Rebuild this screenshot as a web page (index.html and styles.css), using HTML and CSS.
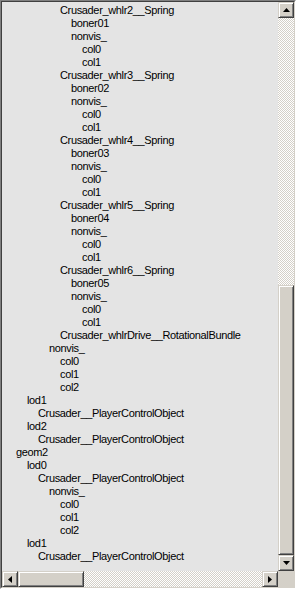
FILE: index.html
```html
<!DOCTYPE html>
<html lang="en">
<head>
    <meta charset="UTF-8">
    <title>Tree</title>
    <link rel="stylesheet" href="styles.css">
</head>
<body>
    <div class="treeview">
        <div class="inner">
            <div class="items">
                <div class="row lv4">Crusader_whlr2__Spring</div>
                <div class="row lv5">boner01</div>
                <div class="row lv5">nonvis_</div>
                <div class="row lv6">col0</div>
                <div class="row lv6">col1</div>
                <div class="row lv4">Crusader_whlr3__Spring</div>
                <div class="row lv5">boner02</div>
                <div class="row lv5">nonvis_</div>
                <div class="row lv6">col0</div>
                <div class="row lv6">col1</div>
                <div class="row lv4">Crusader_whlr4__Spring</div>
                <div class="row lv5">boner03</div>
                <div class="row lv5">nonvis_</div>
                <div class="row lv6">col0</div>
                <div class="row lv6">col1</div>
                <div class="row lv4">Crusader_whlr5__Spring</div>
                <div class="row lv5">boner04</div>
                <div class="row lv5">nonvis_</div>
                <div class="row lv6">col0</div>
                <div class="row lv6">col1</div>
                <div class="row lv4">Crusader_whlr6__Spring</div>
                <div class="row lv5">boner05</div>
                <div class="row lv5">nonvis_</div>
                <div class="row lv6">col0</div>
                <div class="row lv6">col1</div>
                <div class="row lv4">Crusader_whlrDrive__RotationalBundle</div>
                <div class="row lv3">nonvis_</div>
                <div class="row lv4">col0</div>
                <div class="row lv4">col1</div>
                <div class="row lv4">col2</div>
                <div class="row lv1">lod1</div>
                <div class="row lv2">Crusader__PlayerControlObject</div>
                <div class="row lv1">lod2</div>
                <div class="row lv2">Crusader__PlayerControlObject</div>
                <div class="row lv0">geom2</div>
                <div class="row lv1">lod0</div>
                <div class="row lv2">Crusader__PlayerControlObject</div>
                <div class="row lv3">nonvis_</div>
                <div class="row lv4">col0</div>
                <div class="row lv4">col1</div>
                <div class="row lv4">col2</div>
                <div class="row lv1">lod1</div>
                <div class="row lv2">Crusader__PlayerControlObject</div>
            </div>

            <!-- vertical scrollbar -->
            <div class="vscroll">
                <div class="btn">
                    <svg width="7" height="4" viewBox="0 0 7 4"><polygon points="3.5,0 7,4 0,4" fill="#000"/></svg>
                </div>
                <div class="track vtrack">
                    <div class="thumb vthumb"></div>
                </div>
                <div class="btn">
                    <svg width="7" height="4" viewBox="0 0 7 4"><polygon points="0,0 7,0 3.5,4" fill="#000"/></svg>
                </div>
            </div>

            <!-- horizontal scrollbar -->
            <div class="hscroll">
                <div class="btn">
                    <svg width="4" height="7" viewBox="0 0 4 7"><polygon points="4,0 4,7 0,3.5" fill="#000"/></svg>
                </div>
                <div class="track htrack">
                    <div class="thumb hthumb"></div>
                </div>
                <div class="btn">
                    <svg width="4" height="7" viewBox="0 0 4 7"><polygon points="0,0 4,3.5 0,7" fill="#000"/></svg>
                </div>
            </div>

            <div class="corner"></div>
        </div>
    </div>
</body>
</html>
```

FILE: styles.css
```css
body {
    margin: 0;
    background-color: #fff;
    font-family: "Liberation Sans", Arial, sans-serif;
    font-size: 11px;
    letter-spacing: -0.35px;
    color: #000;
}

.treeview {
    width: 296px;
    height: 589px;
    box-sizing: border-box;
    border: 1px solid;
    border-color: #808080 #fff #fff #808080;
}

.inner {
    height: 100%;
    box-sizing: border-box;
    border: 1px solid;
    border-color: #404040 #d4d0c8 #d4d0c8 #404040;
    display: grid;
    grid-template-columns: 1fr 16px;
    grid-template-rows: 1fr 16px;
    background-color: #e4e4e4;
}

.items {
    padding-top: 2px;
    overflow: hidden;
}

.row {
    height: 13px;
    line-height: 13px;
    white-space: nowrap;
}

.lv0 { padding-left: 14px; }
.lv1 { padding-left: 25px; }
.lv2 { padding-left: 36px; }
.lv3 { padding-left: 47px; }
.lv4 { padding-left: 58px; }
.lv5 { padding-left: 69px; }
.lv6 { padding-left: 80px; }

.vscroll {
    display: flex;
    flex-direction: column;
}

.hscroll {
    display: flex;
}

.btn, .thumb, .corner {
    background-color: #d4d0c8;
}

.btn, .thumb {
    box-sizing: border-box;
    border: 1px solid;
    border-color: #d4d0c8 #404040 #404040 #d4d0c8;
    box-shadow: inset 1px 1px #fff, inset -1px -1px #808080;
}

.btn {
    width: 16px;
    height: 16px;
    flex: none;
    display: flex;
    align-items: center;
    justify-content: center;
}

.btn svg {
    display: block;
}

.track {
    flex: 1;
    display: flex;
    background: repeating-conic-gradient(#fff 0 25%, #d4d0c8 0 50%) 0 0 / 2px 2px;
}

.vtrack {
    flex-direction: column;
    justify-content: flex-end;
}

.vthumb {
    height: 270px;
}

.hthumb {
    width: 66px;
}
```
